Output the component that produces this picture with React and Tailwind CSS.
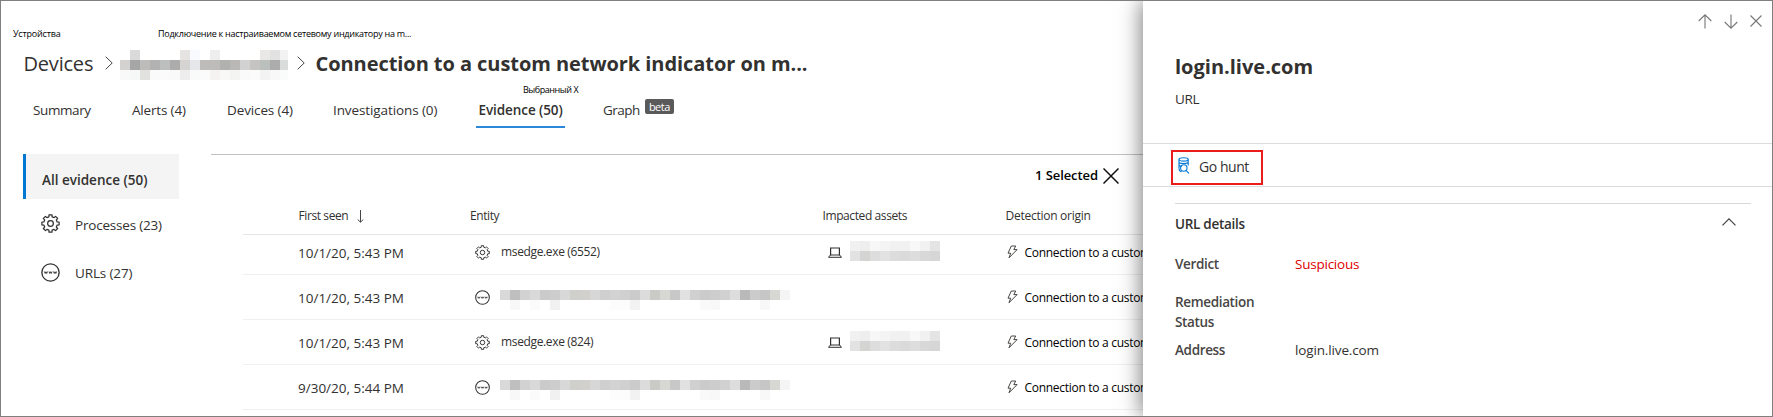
import React from "react";

function gearPath(cx, cy, outer, inner, teeth) {
  const pts = [];
  const step = (Math.PI * 2) / teeth;
  for (let i = 0; i < teeth; i++) {
    const a = i * step - Math.PI / 2;
    [[-0.3, inner], [-0.22, outer], [0.22, outer], [0.3, inner]].forEach(([o, r]) => {
      pts.push(`${(cx + r * Math.cos(a + o * step)).toFixed(2)} ${(cy + r * Math.sin(a + o * step)).toFixed(2)}`);
    });
  }
  return `M${pts.join("L")}Z`;
}

const GEAR = gearPath(10, 10, 9.2, 7.2, 8);

function GearIcon({ className }) {
  return (
    <svg viewBox="0 0 20 20" className={className} fill="none" stroke="currentColor" strokeWidth="1.3" strokeLinejoin="round">
      <path d={GEAR} />
      <circle cx="10" cy="10" r="3" />
    </svg>
  );
}

function WebIcon({ className }) {
  return (
    <svg viewBox="0 0 20 20" className={className} fill="none" stroke="currentColor" strokeWidth="1.4">
      <circle cx="10" cy="10" r="9.1" />
      <path strokeWidth="1" d="M3.6 9l.8 2 .8-1.8.8 1.8.8-2M8.4 9l.8 2 .8-1.8.8 1.8.8-2M13.2 9l.8 2 .8-1.8.8 1.8.8-2" />
    </svg>
  );
}

function LaptopIcon() {
  return (
    <svg viewBox="0 0 14 11" className="h-[11px] w-[14px] shrink-0" fill="none" stroke="#323130">
      <path strokeWidth="1.2" d="M2.6 8.2V1h8.8v7.2" />
      <path d="M2.4 8h9.2l1.9 2.3H.5z" strokeWidth="1" />
    </svg>
  );
}

function BoltIcon() {
  return (
    <svg viewBox="0 0 11 14" className="h-[14px] w-[11px] shrink-0" fill="none" stroke="#484644" strokeWidth="1" strokeLinejoin="round">
      <path d="M4.3 1h4.4L6.8 4.6h3.3L2 12.8l1.7-4.6H1z" />
    </svg>
  );
}

function HuntIcon() {
  return (
    <svg viewBox="0 0 12 17" className="h-[17px] w-[12px] shrink-0" fill="none" stroke="#0078d4" strokeWidth="1.1">
      <ellipse cx="5.6" cy="2.4" rx="4.6" ry="1.7" />
      <path d="M1 2.4v9M10.2 2.4v6M1 5.2c.8 1.8 8.4 1.8 9.2 0M1 8c.6 1 2 1.3 3 1.3" />
      <circle cx="5.8" cy="11" r="3.2" />
      <path d="M8 13.3l3 3M1 11.4c0 1.5.6 2.7 2.6 3.4" />
    </svg>
  );
}

function Crumb() {
  return (
    <svg viewBox="0 0 8 14" className="h-[14px] w-[8px] shrink-0" fill="none" stroke="#484644" strokeWidth="1">
      <path d="M.7.7L7.2 7 .7 13.3" />
    </svg>
  );
}

function Arrow({ down }) {
  return (
    <svg viewBox="0 0 14 15" className="h-[15px] w-[14px] shrink-0" fill="none" stroke="#767676" strokeWidth="1.1">
      {down ? <path d="M7 .5v13.5M.7 8L7 14.2 13.3 8" /> : <path d="M7 14.5V1M.7 7L7 .8 13.3 7" />}
    </svg>
  );
}

const NAME = [
  ["", "#dadada", "", "", "", "", "#e6e4e2", "#f8faff", "", "#eeeeee", "", "", "", "", "#e9e8e6", "#e2e2e2", "#f2f2f2"],
  ["#d4d2d0", "#a6a6a6", "#bdbcba", "#b2b2b2", "#bcbfbe", "#acacac", "#d6d4d2", "#e5e7ea", "#bdbcba", "#bdbcba", "#b1b1b0", "#b9b8b7", "#d2d2d2", "#c6c4c2", "#bbbfbd", "#acacac", "#dadcdb"],
  ["#f9f9f9", "#f5f8f7", "#e1e1df", "#fafafa", "#fbfbfb", "#f9f9f9", "#ededed", "#f9fafa", "#fbfbfb", "#f4f3f1", "#f8f8f7", "#f4f4f3", "#fafafa", "#fbfbfb", "#f3f3f3", "#f8f8f8", "#fafcfb"],
];

const URL_BLOCKS = [
  ["#d9d9d9", "#bfbfbf", "#d2d2d2", "#d9d9d9", "#cbcbcb", "#cdcdcd", "#d8d8d8", "#cfcfcc", "#d1d0cd", "#d7d7d7", "#cfcfcf", "#d3d3d3", "#d0d0d0", "#cbcbcb", "#dcdcdc", "#cacac7", "#d7d7d4", "#c8c8c8", "#e1e1e1", "#d0d0d0", "#cbcbcb", "#cdcdcd", "#d1d1d1", "#dddddd", "#b9b9b9", "#cbcbcb", "#c6c6c6", "#d7d7d4", "#f5f5f5"],
  ["", "#f8f8f8", "", "#fbfbfb", "", "#f1f1f1", "", "", "", "", "", "#fcfcfc", "#fcfcfc", "#f2f2f2", "", "", "", "", "", "", "#f9f9f9", "#f8f8f8", "", "", "", "", "#f8f8f8", "", ""],
];

const ASSET_BLOCKS = [
  ["#f1f1f1", "#eeeeee", "#f7f7f7", "#f4f4f4", "#f1f1f1", "#f1f1f1", "#f8f8f8", "#f1f1f1", "#e4e4e4"],
  ["#e2e2e2", "#d4d4d2", "#dddddd", "#e2e2e2", "#dcdcdc", "#dadada", "#dddddd", "#d8d8d8", "#d6d6d6"],
];

function Mosaic({ rows }) {
  return (
    <div className="flex shrink-0 flex-col">
      {rows.map((row, r) => (
        <div key={r} className="flex">
          {row.map((color, c) => (
            <div key={c} className="size-[10px] shrink-0" style={{ backgroundColor: color || "transparent" }} />
          ))}
        </div>
      ))}
    </div>
  );
}

const ROWS = [
  { seen: "10/1/20, 5:43 PM", process: "msedge.exe (6552)" },
  { seen: "10/1/20, 5:43 PM" },
  { seen: "10/1/20, 5:43 PM", process: "msedge.exe (824)" },
  { seen: "9/30/20, 5:44 PM" },
];

function EvidenceRow({ seen, process }) {
  return (
    <div className="grid h-[45px] grid-cols-[55px_172px_353px_183px_1fr] items-center border-b border-[#f0f0f0]">
      <div />
      <div className="pt-[2px] text-[13.5px] leading-5">{seen}</div>
      {process ? (
        <div className="flex items-center pl-[5px]">
          <GearIcon className="size-[15px] shrink-0" />
          <span className="ml-[11px] text-[12px] leading-4 tracking-[-0.35px]">{process}</span>
        </div>
      ) : (
        <div className="flex items-center pl-[5px]">
          <WebIcon className="size-[15px] shrink-0" />
          <div className="ml-[10px] pt-[6px]"><Mosaic rows={URL_BLOCKS} /></div>
        </div>
      )}
      {process ? (
        <div className="flex items-center pl-[5px]">
          <LaptopIcon />
          <div className="-mt-[3px] ml-[8px]"><Mosaic rows={ASSET_BLOCKS} /></div>
        </div>
      ) : <div />}
      <div className="flex items-center overflow-hidden pl-px">
        <BoltIcon />
        <span className="mt-[2px] ml-[6.5px] text-[12px] leading-4 tracking-[-0.29px] whitespace-nowrap text-black">Connection to a custom</span>
      </div>
    </div>
  );
}

function Detail({ label, children, className }) {
  return (
    <div className={"grid grid-cols-[120px_1fr] text-[13.5px] leading-5 " + className}>
      <div className="w-[90px] font-semibold tracking-[-0.35px] text-[#484644]">{label}</div>
      <div>{children}</div>
    </div>
  );
}

export default function App() {
  return (
    <div className="flex h-[417px] w-[1773px] overflow-hidden border border-[#7f7f7f] bg-white font-['Open_Sans','Noto_Sans',sans-serif] text-[#323130]">
      <main className="flex w-[1142px] shrink-0 flex-col overflow-hidden pt-[27px]">
        <div className="flex text-[9px] leading-3 whitespace-nowrap text-black">
          <span className="w-[145px] shrink-0 pl-3 tracking-[-0.2px]">Устройства</span>
          <span className="pl-3 tracking-[-0.26px]">Подключение к настраиваемом сетевому индикатору на m...</span>
        </div>

        <div className="mt-[9px] flex h-7 items-center pl-[22.5px] text-xl leading-7 whitespace-nowrap">
          <span className="w-[81px] shrink-0 pt-[2px] tracking-[-0.2px]">Devices</span>
          <Crumb />
          <div className="ml-[7px] w-[168px] overflow-hidden pt-[3px]"><Mosaic rows={NAME} /></div>
          <div className="ml-[9px]"><Crumb /></div>
          <h1 className="ml-[11px] pt-[2px] font-bold tracking-[-0.06px]">Connection to a custom network indicator on m...</h1>
        </div>

        <div className="mt-[7px] pl-[522px] text-[9px] leading-3 tracking-[-0.45px] text-black">Выбранный X</div>

        <nav className="mt-1 grid h-7 grid-cols-[99px_95px_106px_143px_126px_auto] justify-start pl-8 text-[13.5px] leading-5 whitespace-nowrap">
          <span className="tracking-[-0.4px]">Summary</span>
          <span className="tracking-[-0.17px]">Alerts (4)</span>
          <span className="tracking-[-0.12px]">Devices (4)</span>
          <span className="tracking-[-0.1px]">Investigations (0)</span>
          <span className="w-[89px] border-b-2 border-[#2b88d8] pl-[2.5px] font-semibold tracking-[-0.08px]">Evidence (50)</span>
          <span className="flex items-start pl-px tracking-[-0.5px]">
            Graph
            <span className="-mt-px ml-[5px] h-[15px] w-[29px] rounded-xs bg-[#5a5a5a] text-center text-[11px] leading-[15px] text-white">beta</span>
          </span>
        </nav>

        <div className="mt-[26px] flex">
          <aside className="ml-[22px] w-[156px] shrink-0 text-[13.5px] leading-5">
            <div className="h-[45px] border-l-[3px] border-[#0078d4] bg-[#f4f4f4] pt-[16px] pl-4 font-semibold">All evidence (50)</div>
            <div className="mt-[14px] flex h-5 items-center pl-[18px] tracking-[-0.2px]">
              <GearIcon className="size-[19px] shrink-0" />
              <span className="mt-[3px] ml-[15px]">Processes (23)</span>
            </div>
            <div className="mt-[29px] flex h-5 items-center pl-[18px] tracking-[-0.14px]">
              <WebIcon className="size-[19px] shrink-0" />
              <span className="mt-px ml-[15px]">URLs (27)</span>
            </div>
          </aside>

          <section className="ml-8 min-w-0 grow border-t border-[#c2c2c2]">
            <div className="flex h-[30px] items-end pl-[824px]">
              <span className="w-[68px] text-[13px] leading-5 font-semibold tracking-[-0.08px] whitespace-nowrap text-black">1 Selected</span>
              <svg viewBox="0 0 16 16" className="mb-[1px] h-4 w-4" fill="none" stroke="#111" strokeWidth="1.5">
                <path d="M.5.5l15 15M15.5.5l-15 15" />
              </svg>
            </div>
            <div className="ml-8 overflow-hidden">
              <div className="grid h-[50px] grid-cols-[55.5px_171.5px_352.5px_183px_1fr] border-b border-[#e6e6e6] pt-[22.5px] text-[12px] leading-4 tracking-[-0.4px]">
                <div />
                <div className="flex items-start">
                  First seen
                  <svg viewBox="0 0 7 13" className="mt-[2.5px] ml-[9px] h-[13px] w-[7px]" fill="none" stroke="#484644" strokeWidth="1">
                    <path d="M3.5 0v12M.7 9.5l2.8 2.7 2.8-2.7" />
                  </svg>
                </div>
                <div>Entity</div>
                <div>Impacted assets</div>
                <div className="tracking-[-0.26px]">Detection origin</div>
              </div>
              <div className="-mt-[5px]">
                {ROWS.map((row, i) => <EvidenceRow key={i} {...row} />)}
              </div>
            </div>
          </section>
        </div>
      </main>

      <aside className="relative z-10 flex min-w-0 grow flex-col bg-white shadow-[-2px_0_20px_rgba(0,0,0,0.5)]">
        <header className="h-[143px] border-b border-[#dcdcdc] pl-8">
          <div className="flex h-[41px] items-start justify-end gap-3 pt-[12.5px] pr-[10px]">
            <Arrow />
            <Arrow down />
            <svg viewBox="0 0 12 12" className="mt-[1.5px] size-3" fill="none" stroke="#767676" strokeWidth="1.1">
              <path d="M.5.5l11 11M11.5.5l-11 11" />
            </svg>
          </div>
          <h2 className="mt-[11px] text-xl leading-7 font-bold">login.live.com</h2>
          <div className="mt-[8px] text-[13.5px] leading-5 tracking-[-0.34px]">URL</div>
        </header>

        <div className="flex h-[43px] items-start border-b border-[#dcdcdc] pt-[6px] pl-7">
          <button className="flex h-[35px] w-[92px] items-start border-2 border-[#ea1c1c] pt-[5px] pl-[5px] text-[14px] leading-5 tracking-[-0.45px]">
            <HuntIcon />
            <span className="ml-[9px]">Go hunt</span>
          </button>
        </div>

        <section className="mt-[15.5px] mr-[21px] ml-8 border-t border-[#d8d8d8]">
          <div className="flex items-start justify-between pt-[10px] pr-[15px] text-[13.5px] leading-5 font-semibold tracking-[-0.29px]">
            URL details
            <svg viewBox="0 0 14 8" className="mt-[4.5px] h-2 w-[14px]" fill="none" stroke="#484644" strokeWidth="1.3">
              <path d="M.5 7.4L7 .9l6.5 6.500" />
            </svg>
          </div>
          <Detail label="Verdict" className="mt-5"><span className="tracking-[-0.23px] text-[#e00000]">Suspicious</span></Detail>
          <Detail label="Remediation Status" className="mt-[18px]" />
          <Detail label="Address" className="mt-2"><span className="tracking-[-0.14px]">login.live.com</span></Detail>
        </section>
      </aside>
    </div>
  );
}
